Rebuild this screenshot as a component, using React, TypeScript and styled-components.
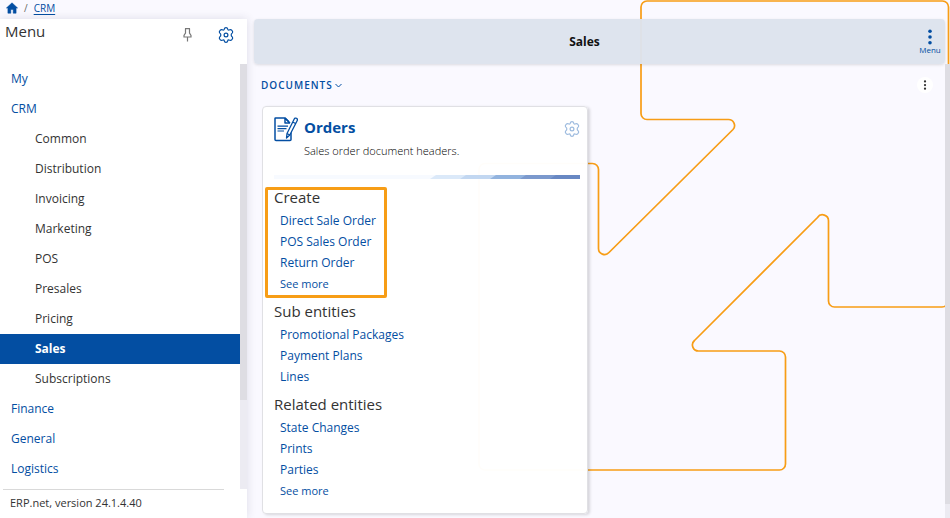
import React from "react";
import styled, { createGlobalStyle, css } from "styled-components";

const blue = "#034ea2";
const orange = "#f79d16";

const GlobalStyle = createGlobalStyle`
  * { box-sizing: border-box; }
  body {
    margin: 0;
    background: #faf9ff;
    color: #333;
    font-family: "Open Sans", "Noto Sans", sans-serif;
    font-size: 12px;
  }
  h1, h2, h3, p, ul { margin: 0; padding: 0; font-weight: 400; }
  ul { list-style: none; }
  a { color: ${blue}; text-decoration: none; }
  button { padding: 0; border: 0; background: none; font: inherit; color: inherit; cursor: pointer; }
  svg { display: block; }
`;

const Page = styled.div`
  position: relative;
  display: flex;
  flex-direction: column;
  height: 100vh;
  overflow: hidden;
`;

const Backdrop = styled.svg`
  position: absolute;
  top: 0;
  right: 0;
`;

const Breadcrumbs = styled.nav`
  position: relative;
  display: flex;
  align-items: center;
  gap: 6px;
  flex: none;
  height: 19px;
  padding: 0 6px 3px;
  font-size: 10px;
  color: #666;
  a:last-child { text-decoration: underline; text-underline-offset: 2px; }
`;

const Body = styled.div`
  position: relative;
  display: flex;
  flex: 1;
  min-height: 0;
`;

const Sidebar = styled.aside`
  display: flex;
  flex-direction: column;
  flex: none;
  width: 247px;
  background: #fff;
  box-shadow: 0 0 9px rgba(40, 40, 80, 0.14);
`;

const SidebarHeader = styled.header`
  display: flex;
  align-items: flex-start;
  gap: 26px;
  flex: none;
  height: 45px;
  padding: 0 13px 0 5px;
  h2 { flex: 1; font-size: 15px; line-height: 25px; }
  button { margin-top: 8px; }
`;

const SidebarScroll = styled.div`
  display: flex;
  flex: 1;
  min-height: 0;
`;

const MenuList = styled.ul`
  flex: 1;
  overflow: hidden;
`;

const MenuLink = styled.a<{ $level: number; $active: boolean }>`
  display: block;
  padding-left: ${(p) => (p.$level ? 35 : 11)}px;
  line-height: 30px;
  color: ${(p) => (p.$level ? "#333" : blue)};
  ${(p) =>
    p.$active &&
    css`
      background: ${blue};
      color: #fff;
      font-weight: 700;
    `}
`;

const ScrollTrack = styled.div<{ $width: number; $thumb: number }>`
  flex: none;
  width: ${(p) => p.$width}px;
  background: #ecebf2;
  &::before {
    content: "";
    display: block;
    height: ${(p) => p.$thumb}%;
    background: #dedde3;
  }
`;

const Version = styled.footer`
  flex: none;
  margin: 0 23px 0 3px;
  padding: 0 0 2px 7px;
  border-top: 1px solid #d9d9d9;
  font-size: 11px;
  line-height: 26px;
`;

const Main = styled.main`
  display: flex;
  flex-direction: column;
  flex: 1;
  min-width: 0;
  padding-left: 7px;
`;

const TitleBar = styled.header`
  display: flex;
  align-items: center;
  flex: none;
  height: 45px;
  margin-right: 5px;
  border-radius: 4px;
  background: rgba(221, 227, 237, 0.97);
  box-shadow: 0 1px 3px rgba(0, 0, 0, 0.12);
  h1 { flex: 1; text-align: center; font-size: 12px; font-weight: 700; color: #111; }
`;

const MenuButton = styled.button`
  display: flex;
  flex-direction: column;
  align-items: center;
  width: 30px;
  color: ${blue};
  font-size: 8px;
  line-height: 10px;
`;

const Scroller = styled.div`
  display: flex;
  flex: 1;
  min-height: 0;
`;

const Content = styled.div`
  flex: 1;
  min-width: 0;
  padding: 12px 12px 0 7px;
`;

const SectionBar = styled.div`
  display: flex;
  justify-content: space-between;
  align-items: center;
  height: 18px;
  margin-bottom: 12px;
`;

const SectionToggle = styled.button`
  display: flex;
  align-items: center;
  gap: 2px;
  color: ${blue};
  font-size: 10px;
  font-weight: 600;
  letter-spacing: 1px;
`;

const MoreButton = styled.button`
  display: grid;
  place-items: center;
  width: 16px;
  height: 16px;
  border-radius: 8px;
  background: #fff;
`;

const Card = styled.article`
  width: 326px;
  margin-left: 1px;
  padding: 10px 7px 6px 11px;
  border: 1px solid #e0e0e4;
  border-radius: 4px;
  background: rgba(255, 255, 255, 0.98);
  box-shadow: 2px 1px 3px rgba(0, 0, 0, 0.14);
`;

const CardHeader = styled.header`
  display: grid;
  grid-template-columns: 24px 1fr 16px;
  column-gap: 6px;
  h2 { font-size: 15px; font-weight: 700; line-height: 21px; }
  p { grid-column: 2; font-size: 11px; font-weight: 300; line-height: 18px; color: #000; }
  button { padding-bottom: 2px; }
`;

const Stripe = styled.svg`
  width: 100%;
  height: 4px;
  margin: 15px 0 8px;
`;

const Group = styled.section<{ $highlight?: boolean }>`
  margin-bottom: 6px;
  h3 { padding-bottom: 2px; font-size: 15px; line-height: 22px; }
  li { padding-left: 6px; line-height: 21px; }
  ${(p) =>
    p.$highlight &&
    css`
      width: max-content;
      margin: 0 0 2px -9px;
      padding: 0 8px 1px 6px;
      border: 3px solid ${orange};
      border-radius: 2px;
      h3 { line-height: 14px; padding-bottom: 6px; }
    `}
`;

const GroupLink = styled.a<{ $small: boolean }>`
  font-size: ${(p) => (p.$small ? 11 : 12)}px;
`;

const Gear = ({ faded = false }: { faded?: boolean }) => (
  <svg width="16" height="16" viewBox="0 0 16 16" fill="none" stroke={faded ? "#9dbbdf" : blue} strokeWidth="1.2" strokeLinejoin="round">
    <path d="M6.3 2.2 Q6.5.7 8 .7 Q9.5.7 9.7 2.2 Q9.9 3.2 11 3 Q12.8 2.2 13.9 3.4 Q15.2 4.8 14.400 5.900 Q13 7 13.200 8 Q13 9 14.400 10.100 Q15.200 11.200 13.900 12.600 Q12.8 13.8 11 13 Q9.9 12.8 9.7 13.8 Q9.5 15.3 8 15.3 Q6.5 15.3 6.3 13.8 Q6.1 12.8 5 13 Q3.2 13.8 2.1 12.6 Q.8 11.2 1.6 10.1 Q3 9 2.8 8 Q3 7 1.6 5.9 Q.8 4.8 2.1 3.4 Q3.2 2.2 5 3 Q6.1 3.2 6.3 2.2Z" />
    <circle cx="8" cy="8" r="1.9" />
  </svg>
);

const Dots = ({ size, color }: { size: number; color: string }) => (
  <svg width={size} height={size} viewBox="0 0 16 16" fill={color}>
    <circle cx="8" cy="2.2" r="1.8" />
    <circle cx="8" cy="8" r="1.8" />
    <circle cx="8" cy="13.8" r="1.8" />
  </svg>
);

const menu: { label: string; level: number }[] = [
  { label: "My", level: 0 },
  { label: "CRM", level: 0 },
  ...["Common", "Distribution", "Invoicing", "Marketing", "POS", "Presales", "Pricing", "Sales", "Subscriptions"].map(
    (label) => ({ label, level: 1 })
  ),
  { label: "Finance", level: 0 },
  { label: "General", level: 0 },
  { label: "Logistics", level: 0 },
];

const groups = [
  { title: "Create", links: ["Direct Sale Order", "POS Sales Order", "Return Order", "See more"], highlight: true },
  { title: "Sub entities", links: ["Promotional Packages", "Payment Plans", "Lines"] },
  { title: "Related entities", links: ["State Changes", "Prints", "Parties", "See more"] },
];

const stripeColors = ["#dbe9f9", "#c2d7f1", "#92b3de", "#7b99cd", "#6888c3"];

export default function App() {
  return (
    <>
      <GlobalStyle />
      <Page>
        <Backdrop width="480" height="518" viewBox="470 0 480 518" fill="none" stroke={orange} strokeWidth="1.7" aria-hidden="true">
          <path d="M948.500 70V7a6 6 0 0 0-6-6H647a6 6 0 0 0-6 6V113.500a6 6 0 0 0 6 6H728.500a6 6 0 0 1 4.500 10L609 252.500A6 6 0 0 1 598.500 248.500V169.500a6 6 0 0 0-6-6H485a6 6 0 0 0-6 6V464a6 6 0 0 0 6 6H779.500a6 6 0 0 0 6-6V357a6 6 0 0 0-6-6H698.500A6 6 0 0 1 694.500 340.500L817.500 217.500A6 6 0 0 1 828.500 221V301a6 6 0 0 0 6 6H942a6 6 0 0 0 6-6" />
        </Backdrop>
        <Breadcrumbs aria-label="Breadcrumb">
          <a href="#home" aria-label="Home">
            <svg width="12" height="12" viewBox="0 0 12 12" fill={blue}>
              <path d="M6 .8 .4 6h1.500v5.200h2.900V7.500h2.400v3.700h2.900V6h1.500Z" stroke={blue} strokeWidth=".5" strokeLinejoin="round" />
            </svg>
          </a>
          <span>/</span>
          <a href="#crm">CRM</a>
        </Breadcrumbs>
        <Body>
          <Sidebar>
            <SidebarHeader>
              <h2>Menu</h2>
              <button type="button" aria-label="Pin menu">
                <svg width="9" height="16" viewBox="0 0 9 16" fill="none" stroke="#777" strokeWidth="1.2">
                  <path d="M2 1.600h5M2.500 1.600v4.400L1 8.500v1.500h7V8.500L6.500 6V1.600M4.500 10v4.500" />
                </svg>
              </button>
              <button type="button" aria-label="Menu settings">
                <Gear />
              </button>
            </SidebarHeader>
            <SidebarScroll>
              <MenuList>
                {menu.map(({ label, level }) => (
                  <li key={label}>
                    <MenuLink href={`#${label}`} $level={level} $active={label === "Sales"}>
                      {label}
                    </MenuLink>
                  </li>
                ))}
              </MenuList>
              <ScrollTrack $width={7} $thumb={79} />
            </SidebarScroll>
            <Version>ERP.net, version 24.1.4.40</Version>
          </Sidebar>
          <Main>
            <TitleBar>
              <h1>Sales</h1>
              <MenuButton type="button">
                <Dots size={16} color={blue} />
                Menu
              </MenuButton>
            </TitleBar>
            <Scroller>
              <Content>
                <SectionBar>
                  <SectionToggle type="button">
                    DOCUMENTS
                    <svg width="7" height="5" viewBox="0 0 7 5" fill="none" stroke={blue}>
                      <path d="M.5 1 3.500 4l3-3" />
                    </svg>
                  </SectionToggle>
                  <MoreButton type="button" aria-label="More">
                    <Dots size={10} color="#333" />
                  </MoreButton>
                </SectionBar>
                <Card>
                  <CardHeader>
                    <svg width="24" height="25" viewBox="0 0 24 25" fill="none" stroke={blue} strokeWidth="1.500" strokeLinejoin="round">
                      <path d="M14.500 4.500 11 1H1.500Q1 1 1 1.500V22.500Q1 23.500 2 23.500H16Q17 23.500 17 22.500V15" />
                      <path d="M11 1V6H16M16 6 11 1" />
                      <path d="M3.500 9.200H14M3.500 11.700H12.500M3.500 14H10" strokeWidth="1.200" />
                      <path d="M13 16.500 20 2.500Q21 .5 22.500 1.300 24 2.200 23 4L15.800 18 12.500 21ZM18.700 5 21.500 6.500M13 16.500 15.800 18" fill="#fff" strokeWidth="1.300" />
                    </svg>
                    <h2>
                      <a href="#orders">Orders</a>
                    </h2>
                    <button type="button" aria-label="Orders settings">
                      <Gear faded />
                    </button>
                    <p>Sales order document headers.</p>
                  </CardHeader>
                  <Stripe viewBox="0 0 306 4" preserveAspectRatio="none" aria-hidden="true">
                    <rect width="306" height="4" fill="#f7faff" />
                    {stripeColors.map((color, i) => (
                      <path key={color} d={`M${156 + i * 30} 4l6-4H306V4Z`} fill={color} />
                    ))}
                  </Stripe>
                  {groups.map(({ title, links, highlight }) => (
                    <Group key={title} $highlight={highlight}>
                      <h3>{title}</h3>
                      <ul>
                        {links.map((link) => (
                          <li key={link}>
                            <GroupLink href="#open" $small={link === "See more"}>
                              {link}
                            </GroupLink>
                          </li>
                        ))}
                      </ul>
                    </Group>
                  ))}
                </Card>
              </Content>
              <ScrollTrack $width={5} $thumb={97} />
            </Scroller>
          </Main>
        </Body>
      </Page>
    </>
  );
}
